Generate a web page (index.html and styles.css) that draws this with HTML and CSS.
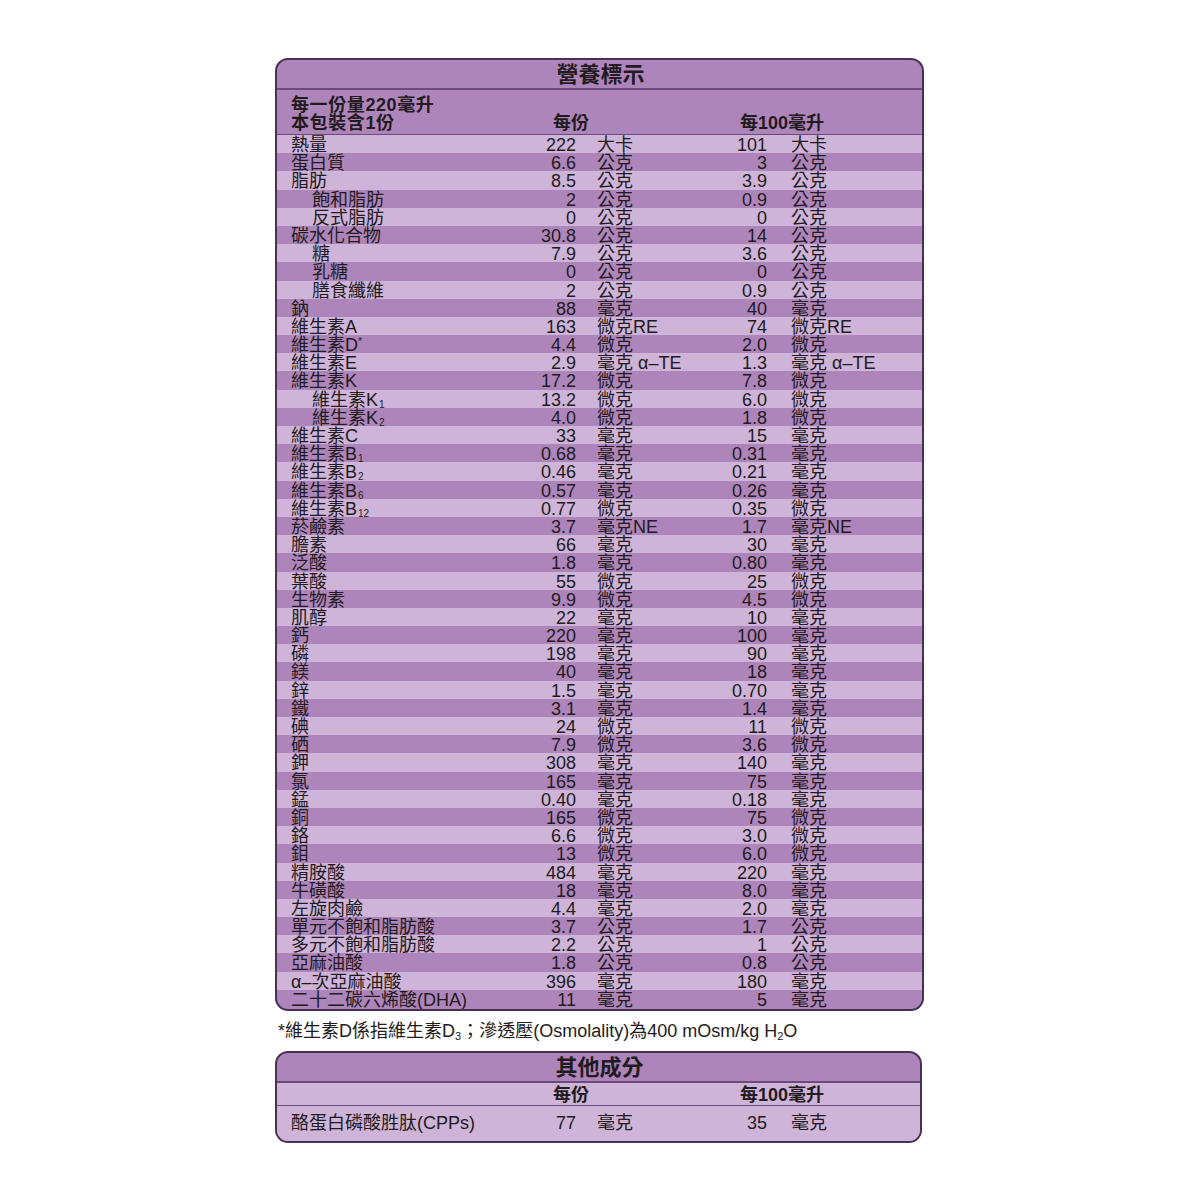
FILE: index.html
```html
<!DOCTYPE html>
<html lang="zh-Hant">
<head>
<meta charset="utf-8">
<link rel="stylesheet" href="styles.css">
</head>
<body>
<div class="page">
  <div class="panel main">
    <div class="title">營養標示</div>
    <div class="head">
      <div class="serving"><div>每一份量220毫升</div><div>本包裝含1份</div></div>
      <div class="hcol">每份</div>
      <div class="hcol">每100毫升</div>
    </div>
    <div class="rows">
      <div class="row"><span class="lab">熱量</span><span class="num">222</span><span class="unit">大卡</span><span class="num">101</span><span class="unit">大卡</span></div>
      <div class="row"><span class="lab">蛋白質</span><span class="num">6.6</span><span class="unit">公克</span><span class="num">3</span><span class="unit">公克</span></div>
      <div class="row"><span class="lab">脂肪</span><span class="num">8.5</span><span class="unit">公克</span><span class="num">3.9</span><span class="unit">公克</span></div>
      <div class="row"><span class="lab ind">飽和脂肪</span><span class="num">2</span><span class="unit">公克</span><span class="num">0.9</span><span class="unit">公克</span></div>
      <div class="row"><span class="lab ind">反式脂肪</span><span class="num">0</span><span class="unit">公克</span><span class="num">0</span><span class="unit">公克</span></div>
      <div class="row"><span class="lab">碳水化合物</span><span class="num">30.8</span><span class="unit">公克</span><span class="num">14</span><span class="unit">公克</span></div>
      <div class="row"><span class="lab ind">糖</span><span class="num">7.9</span><span class="unit">公克</span><span class="num">3.6</span><span class="unit">公克</span></div>
      <div class="row"><span class="lab ind">乳糖</span><span class="num">0</span><span class="unit">公克</span><span class="num">0</span><span class="unit">公克</span></div>
      <div class="row"><span class="lab ind">膳食纖維</span><span class="num">2</span><span class="unit">公克</span><span class="num">0.9</span><span class="unit">公克</span></div>
      <div class="row"><span class="lab">鈉</span><span class="num">88</span><span class="unit">毫克</span><span class="num">40</span><span class="unit">毫克</span></div>
      <div class="row"><span class="lab">維生素A</span><span class="num">163</span><span class="unit">微克RE</span><span class="num">74</span><span class="unit">微克RE</span></div>
      <div class="row"><span class="lab">維生素D<span class="sup">*</span></span><span class="num">4.4</span><span class="unit">微克</span><span class="num">2.0</span><span class="unit">微克</span></div>
      <div class="row"><span class="lab">維生素E</span><span class="num">2.9</span><span class="unit">毫克 α–TE</span><span class="num">1.3</span><span class="unit">毫克 α–TE</span></div>
      <div class="row"><span class="lab">維生素K</span><span class="num">17.2</span><span class="unit">微克</span><span class="num">7.8</span><span class="unit">微克</span></div>
      <div class="row"><span class="lab ind">維生素K<span class="sub">1</span></span><span class="num">13.2</span><span class="unit">微克</span><span class="num">6.0</span><span class="unit">微克</span></div>
      <div class="row"><span class="lab ind">維生素K<span class="sub">2</span></span><span class="num">4.0</span><span class="unit">微克</span><span class="num">1.8</span><span class="unit">微克</span></div>
      <div class="row"><span class="lab">維生素C</span><span class="num">33</span><span class="unit">毫克</span><span class="num">15</span><span class="unit">毫克</span></div>
      <div class="row"><span class="lab">維生素B<span class="sub">1</span></span><span class="num">0.68</span><span class="unit">毫克</span><span class="num">0.31</span><span class="unit">毫克</span></div>
      <div class="row"><span class="lab">維生素B<span class="sub">2</span></span><span class="num">0.46</span><span class="unit">毫克</span><span class="num">0.21</span><span class="unit">毫克</span></div>
      <div class="row"><span class="lab">維生素B<span class="sub">6</span></span><span class="num">0.57</span><span class="unit">毫克</span><span class="num">0.26</span><span class="unit">毫克</span></div>
      <div class="row"><span class="lab">維生素B<span class="sub">12</span></span><span class="num">0.77</span><span class="unit">微克</span><span class="num">0.35</span><span class="unit">微克</span></div>
      <div class="row"><span class="lab">菸鹼素</span><span class="num">3.7</span><span class="unit">毫克NE</span><span class="num">1.7</span><span class="unit">毫克NE</span></div>
      <div class="row"><span class="lab">膽素</span><span class="num">66</span><span class="unit">毫克</span><span class="num">30</span><span class="unit">毫克</span></div>
      <div class="row"><span class="lab">泛酸</span><span class="num">1.8</span><span class="unit">毫克</span><span class="num">0.80</span><span class="unit">毫克</span></div>
      <div class="row"><span class="lab">葉酸</span><span class="num">55</span><span class="unit">微克</span><span class="num">25</span><span class="unit">微克</span></div>
      <div class="row"><span class="lab">生物素</span><span class="num">9.9</span><span class="unit">微克</span><span class="num">4.5</span><span class="unit">微克</span></div>
      <div class="row"><span class="lab">肌醇</span><span class="num">22</span><span class="unit">毫克</span><span class="num">10</span><span class="unit">毫克</span></div>
      <div class="row"><span class="lab">鈣</span><span class="num">220</span><span class="unit">毫克</span><span class="num">100</span><span class="unit">毫克</span></div>
      <div class="row"><span class="lab">磷</span><span class="num">198</span><span class="unit">毫克</span><span class="num">90</span><span class="unit">毫克</span></div>
      <div class="row"><span class="lab">鎂</span><span class="num">40</span><span class="unit">毫克</span><span class="num">18</span><span class="unit">毫克</span></div>
      <div class="row"><span class="lab">鋅</span><span class="num">1.5</span><span class="unit">毫克</span><span class="num">0.70</span><span class="unit">毫克</span></div>
      <div class="row"><span class="lab">鐵</span><span class="num">3.1</span><span class="unit">毫克</span><span class="num">1.4</span><span class="unit">毫克</span></div>
      <div class="row"><span class="lab">碘</span><span class="num">24</span><span class="unit">微克</span><span class="num">11</span><span class="unit">微克</span></div>
      <div class="row"><span class="lab">硒</span><span class="num">7.9</span><span class="unit">微克</span><span class="num">3.6</span><span class="unit">微克</span></div>
      <div class="row"><span class="lab">鉀</span><span class="num">308</span><span class="unit">毫克</span><span class="num">140</span><span class="unit">毫克</span></div>
      <div class="row"><span class="lab">氯</span><span class="num">165</span><span class="unit">毫克</span><span class="num">75</span><span class="unit">毫克</span></div>
      <div class="row"><span class="lab">錳</span><span class="num">0.40</span><span class="unit">毫克</span><span class="num">0.18</span><span class="unit">毫克</span></div>
      <div class="row"><span class="lab">銅</span><span class="num">165</span><span class="unit">微克</span><span class="num">75</span><span class="unit">微克</span></div>
      <div class="row"><span class="lab">鉻</span><span class="num">6.6</span><span class="unit">微克</span><span class="num">3.0</span><span class="unit">微克</span></div>
      <div class="row"><span class="lab">鉬</span><span class="num">13</span><span class="unit">微克</span><span class="num">6.0</span><span class="unit">微克</span></div>
      <div class="row"><span class="lab">精胺酸</span><span class="num">484</span><span class="unit">毫克</span><span class="num">220</span><span class="unit">毫克</span></div>
      <div class="row"><span class="lab">牛磺酸</span><span class="num">18</span><span class="unit">毫克</span><span class="num">8.0</span><span class="unit">毫克</span></div>
      <div class="row"><span class="lab">左旋肉鹼</span><span class="num">4.4</span><span class="unit">毫克</span><span class="num">2.0</span><span class="unit">毫克</span></div>
      <div class="row"><span class="lab">單元不飽和脂肪酸</span><span class="num">3.7</span><span class="unit">公克</span><span class="num">1.7</span><span class="unit">公克</span></div>
      <div class="row"><span class="lab">多元不飽和脂肪酸</span><span class="num">2.2</span><span class="unit">公克</span><span class="num">1</span><span class="unit">公克</span></div>
      <div class="row"><span class="lab">亞麻油酸</span><span class="num">1.8</span><span class="unit">公克</span><span class="num">0.8</span><span class="unit">公克</span></div>
      <div class="row"><span class="lab">α–次亞麻油酸</span><span class="num">396</span><span class="unit">毫克</span><span class="num">180</span><span class="unit">毫克</span></div>
      <div class="row"><span class="lab">二十二碳六烯酸(DHA)</span><span class="num">11</span><span class="unit">毫克</span><span class="num">5</span><span class="unit">毫克</span></div>
    </div>
  </div>

  <p class="note">*維生素D係指維生素D<span class="nsub">3</span>；滲透壓(Osmolality)為400 mOsm/kg H<span class="nsub">2</span>O</p>

  <div class="panel other">
    <div class="title">其他成分</div>
    <div class="ohead">
      <div></div>
      <div class="hcol">每份</div>
      <div class="hcol">每100毫升</div>
    </div>
    <div class="orow">
      <span class="lab">酪蛋白磷酸胜肽(CPPs)</span><span class="num">77</span><span class="unit">毫克</span><span class="num">35</span><span class="unit">毫克</span>
    </div>
  </div>
</div>
</body>
</html>
```

FILE: styles.css
```css
html, body {
  margin: 0;
  padding: 0;
  background: #ffffff;
}

body {
  font-family: "Liberation Sans", "Noto Sans CJK TC", sans-serif;
  color: #231a20;
}

.page {
  padding: 58px 0 0 275px;
}

.panel {
  width: 645px;
  border: 2px solid #4a3054;
  border-radius: 13px;
  background: #ad85bb;
  overflow: hidden;
}

.title {
  height: 28px;
  line-height: 30px;
  text-align: center;
  font-weight: bold;
  font-size: 22px;
  border-bottom: 2px solid #6c4a79;
  padding-left: 2px;
}

.head {
  display: grid;
  grid-template-columns: 262px 187px 1fr;
  padding-left: 14px;
  height: 44px;
  border-bottom: 1.5px solid #6c4a79;
  align-items: end;
  font-weight: bold;
  font-size: 18px;
}

.serving {
  font-size: 18px;
  line-height: 18px;
  letter-spacing: 0.6px;
  padding-bottom: 2px;
}

.hcol {
  line-height: 18px;
  padding-bottom: 2px;
}

.rows {
  padding-bottom: 1px;
}

.row, .orow {
  display: grid;
  grid-template-columns: 229px 56px 124px 67px 1fr;
  padding-left: 14px;
  font-size: 18px;
  height: 18.2px;
  line-height: 20px;
  white-space: nowrap;
}

.row:nth-child(odd) {
  background: #cdb4d8;
}

.num {
  text-align: right;
}

.unit {
  padding-left: 21px;
}

.row .unit:last-child {
  padding-left: 24px;
}

.ind {
  padding-left: 21px;
}

.sub {
  font-size: 10px;
  vertical-align: -2px;
  line-height: 0;
  margin-left: 1px;
}

.sup {
  font-size: 10px;
  vertical-align: 6px;
  line-height: 0;
}

.note {
  margin: 9px 0 0 3px;
  font-size: 18px;
  line-height: 22px;
  height: 22px;
  padding-bottom: 9px;
}

.nsub {
  font-size: 11px;
  vertical-align: -3px;
  line-height: 0;
}

.other {
  width: 643px;
}

.ohead {
  display: grid;
  grid-template-columns: 262px 187px 1fr;
  padding-left: 14px;
  height: 22px;
  background: #cdb4d8;
  border-bottom: 1.5px solid #6c4a79;
  font-weight: bold;
  font-size: 18px;
  align-items: end;
}

.ohead .hcol {
  line-height: 20px;
  padding-bottom: 0;
}

.orow {
  background: #cdb4d8;
  height: 35px;
  line-height: 35px;
}

.orow .unit:last-child {
  padding-left: 24px;
}
```
